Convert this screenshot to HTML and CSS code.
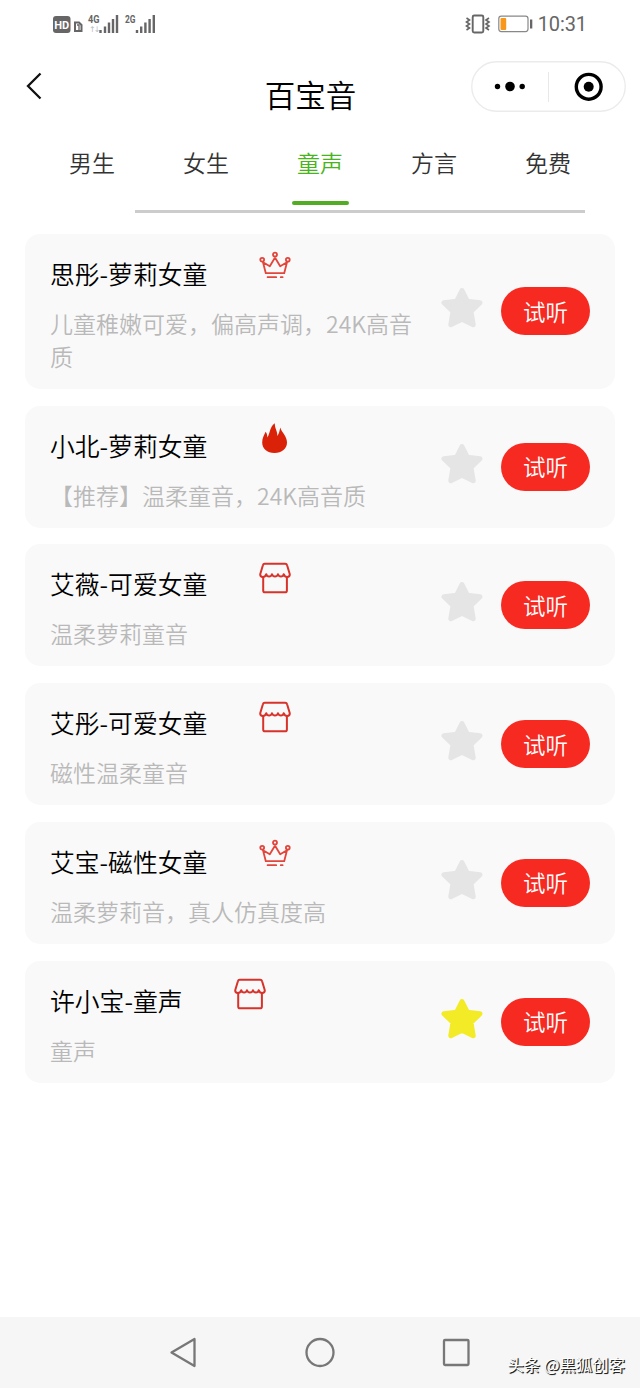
FILE: index.html
```html
<!DOCTYPE html>
<html lang="zh-CN">
<head>
<meta charset="utf-8">
<title>百宝音</title>
<link rel="stylesheet" href="styles.css">
</head>
<body>
<svg class="defs" width="0" height="0" aria-hidden="true">
  <symbol id="crown" viewBox="0 0 32 32">
    <g fill="none" stroke="#e2453b" stroke-width="1.8" stroke-linejoin="round" stroke-linecap="round">
      <path d="M4 11.2L6.800 22.200H25.200L28 11.200L21.2 15.2L16.4 7.2H15.6L10.800 15.200Z"/>
      <path d="M8.6 26.2H17.2M21.8 26.2H23.6"/>
      <circle cx="3.2" cy="8.800" r="1.900" fill="#f9f9f9"/><circle cx="16" cy="3.600" r="2" fill="#f9f9f9"/><circle cx="28.800" cy="8.800" r="1.900" fill="#f9f9f9"/>
    </g>
  </symbol>
  <symbol id="fire" viewBox="0 0 32 32">
    <path fill="#d92207" d="M15.500 30C8 30 3.2 25.500 3.2 19.500C3.2 15.500 4.800 12.500 6.600 8.800C8 10.400 8.300 12.500 8.400 14.500C11.2 10.400 10.400 4.200 15.800.3C15.600 5.200 18.700 8.500 18.300 13C20.300 10.500 20.500 7.500 21.300 4.500C22.800 9.800 28 13 28 19.500C28 25.500 22.800 30 15.500 30Z"/>
  </symbol>
  <symbol id="shop" viewBox="0 0 32 32">
    <g fill="none" stroke="#d7332b" stroke-width="2" stroke-linejoin="round" stroke-linecap="round">
      <path d="M5.600 1.700H26.200Q27.700 1.700 28.100 3.200L30.800 12.300C30.800 15.900 26.100 16.100 24.700 12.200C23.900 15.200 20 15.200 19 12.200C18 15.200 14 15.200 13 12.200C12 15.200 8.100 15.200 7.300 12.200C5.900 16.100 1.200 15.900 1.200 12.300L3.900 3.200Q4.300 1.700 5.600 1.700Z"/>
      <path d="M4.200 15V28.400Q4.200 30.300 6.100 30.300H26Q27.900 30.300 27.900 28.400V15"/>
    </g>
  </symbol>
  <symbol id="star" viewBox="0 0 42 42">
    <path fill="currentColor" stroke="currentColor" stroke-width="5" stroke-linejoin="round" d="M21 3.600L26.300 14.200L39 15.800L30 24.500L32.200 37.700L21 32.300L9.800 37.700L12 24.500L3 15.800L15.700 14.200Z"/>
  </symbol>
</svg>

<header class="status">
  <svg width="110" height="26" viewBox="50 11 110 26">
    <rect x="53" y="16" width="17.500" height="17" rx="3" fill="#666"/>
    <text class="hd" x="54.300" y="28.800" textLength="15" lengthAdjust="spacingAndGlyphs">HD</text>
    <path d="M75 22.500H79L81.500 25V31H75Z" fill="none" stroke="#666" stroke-width="2"/>
    <path d="M77 25H79V30" fill="none" stroke="#666" stroke-width="1.300"/>
    <text class="net" x="88" y="22.700" textLength="11.500" lengthAdjust="spacingAndGlyphs">4G</text>
    <text class="updown" x="89" y="32">↑↓</text>
    <path d="M100.500 30V33M105 26.500V33M109 22.500V33M113 19V33M117 15V33" stroke="#666" stroke-width="2.400"/>
    <text class="net" x="125" y="22.700" textLength="10.500" lengthAdjust="spacingAndGlyphs">2G</text>
    <path d="M137 30V33M141.200 26.500V33M145.400 22.500V33M149.600 19V33M153.800 15V33" stroke="#666" stroke-width="2.400"/>
  </svg>
  <div class="status-right">
    <svg width="68" height="26" viewBox="465 11 68 26">
      <g fill="none" stroke="#666" stroke-width="1.600">
        <rect x="472.700" y="15.500" width="10.600" height="17" rx="1.500" stroke-width="1.900"/>
        <path d="M466.500 18L469.500 20L466.500 22L469.500 24L466.500 26L469.500 28L466.500 30M489 18L486 20L489 22L486 24L489 26L486 28L489 30"/>
        <rect x="498.800" y="16.200" width="29.200" height="15.400" rx="2.500" stroke="#888" stroke-width="1.200"/>
      </g>
      <rect x="500.500" y="18" width="5.700" height="12" rx="1" fill="#f7981d"/>
      <rect x="530" y="19.500" width="2.300" height="9" fill="#666"/>
    </svg>
    <span class="time">10:31</span>
  </div>
</header>

<div class="navbar">
  <svg class="back" width="18" height="30" viewBox="0 0 18 30"><path d="M15.500 2.500L3 15L15.500 27.500" fill="none" stroke="#111" stroke-width="2.300"/></svg>
  <h1 class="title">百宝音</h1>
  <div class="capsule">
    <svg width="155" height="51" viewBox="0 0 155 51">
      <rect x=".75" y=".75" width="153.500" height="49.500" rx="24.750" fill="#fff" stroke="#ebebeb" stroke-width="1.300"/>
      <path d="M77.500 11V41" stroke="#e8e8e8"/>
      <circle cx="26.500" cy="25.500" r="2.700"/><circle cx="39" cy="25.500" r="4.800"/><circle cx="51.200" cy="25.500" r="2.700"/>
      <circle cx="117.700" cy="25.800" r="12.400" fill="none" stroke="#000" stroke-width="3.400"/><circle cx="117.700" cy="25.800" r="5"/>
    </svg>
  </div>
</div>

<nav class="tabs">
  <span class="tab">男生</span>
  <span class="tab">女生</span>
  <span class="tab active">童声</span>
  <span class="tab">方言</span>
  <span class="tab">免费</span>
</nav>
<div class="divider"></div>

<main class="list">
  <section class="card">
    <div class="info"><div class="head"><h2 class="name">思彤-萝莉女童</h2><svg class="badge"><use href="#crown"/></svg></div><p class="desc">儿童稚嫩可爱，偏高声调，24K高音质</p></div>
    <svg class="star"><use href="#star"/></svg><button class="play">试听</button>
  </section>
  <section class="card">
    <div class="info"><div class="head"><h2 class="name">小北-萝莉女童</h2><svg class="badge"><use href="#fire"/></svg></div><p class="desc">【推荐】温柔童音，24K高音质</p></div>
    <svg class="star"><use href="#star"/></svg><button class="play">试听</button>
  </section>
  <section class="card">
    <div class="info"><div class="head"><h2 class="name">艾薇-可爱女童</h2><svg class="badge"><use href="#shop"/></svg></div><p class="desc">温柔萝莉童音</p></div>
    <svg class="star"><use href="#star"/></svg><button class="play">试听</button>
  </section>
  <section class="card">
    <div class="info"><div class="head"><h2 class="name">艾彤-可爱女童</h2><svg class="badge"><use href="#shop"/></svg></div><p class="desc">磁性温柔童音</p></div>
    <svg class="star"><use href="#star"/></svg><button class="play">试听</button>
  </section>
  <section class="card">
    <div class="info"><div class="head"><h2 class="name">艾宝-磁性女童</h2><svg class="badge"><use href="#crown"/></svg></div><p class="desc">温柔萝莉音，真人仿真度高</p></div>
    <svg class="star"><use href="#star"/></svg><button class="play">试听</button>
  </section>
  <section class="card">
    <div class="info"><div class="head"><h2 class="name">许小宝-童声</h2><svg class="badge"><use href="#shop"/></svg></div><p class="desc">童声</p></div>
    <svg class="star on"><use href="#star"/></svg><button class="play">试听</button>
  </section>
</main>

<footer class="sysbar">
  <svg width="310" height="40" viewBox="165 1333 310 40" fill="none" stroke="#777" stroke-width="2.300" stroke-linejoin="round">
    <path d="M171.500 1352.500L194.500 1339V1366Z"/>
    <circle cx="320" cy="1352.500" r="13.500"/>
    <rect x="444" y="1340" width="24.500" height="25" rx="1"/>
  </svg>
  <span class="watermark">头条 @黑狐创客</span>
</footer>
</body>
</html>
```
FILE: styles.css
```css
* { box-sizing: border-box; }
body {
  margin: 0;
  width: 640px;
  height: 1388px;
  display: flex;
  flex-direction: column;
  overflow: hidden;
  background: #fff;
  font-family: "Noto Sans CJK SC", "Noto Sans", sans-serif;
  font-weight: 350;
}
h1, h2, p { margin: 0; font-weight: inherit; }
svg { display: block; flex: none; }
.defs { position: absolute; }

.status {
  height: 48px;
  padding: 0 53px 0 50px;
  display: flex;
  align-items: center;
  justify-content: space-between;
}
.status-right { display: flex; align-items: center; gap: 5px; }
.time { font: 400 20px/26px Roboto, sans-serif; color: #666; letter-spacing: -0.1px; }
.hd { font: 700 11.5px Roboto, sans-serif; fill: #fff; }
.net { font: 700 10.5px Roboto, sans-serif; fill: #666; }
.updown { font: 8px "DejaVu Sans", sans-serif; fill: #bbb; letter-spacing: -2px; }

.navbar {
  height: 82px;
  padding: 13px 14px 0 25px;
  display: grid;
  grid-template-columns: 155px 1fr 155px;
  align-items: start;
}
.back { margin-top: 10px; }
.title {
  padding: 10px 20px 0 0;
  font-size: 30.5px;
  line-height: 46px;
  text-align: center;
  margin-left: -10px;
  color: #000;
}

.tabs {
  height: 80px;
  padding: 9px 35px 5px;
  display: grid;
  grid-template-columns: repeat(5, 114px);
}
.tab {
  display: flex;
  flex-direction: column;
  align-items: center;
  justify-content: space-between;
  font-size: 23px;
  line-height: 46px;
  color: #333;
}
.active { color: #48b41c; }
.active::after {
  content: "";
  width: 57px;
  height: 4px;
  border-radius: 2px;
  background: #52ad24;
}
.divider { width: 450px; height: 3px; margin-left: 135px; background: #ccc; }

.list {
  flex: 1;
  padding: 20.8px 25px 0;
  display: flex;
  flex-direction: column;
  gap: 16.8px;
}
.card {
  min-height: 122px;
  padding: 21px 25px 16px 25px;
  display: flex;
  align-items: center;
  border-radius: 15px;
  background: #f9f9f9;
}
.info { width: 375px; margin-right: 16.5px; align-self: flex-start; }
.head { display: flex; gap: 51.5px; height: 35px; }
.name { font-size: 24.8px; line-height: 36px; color: #000; white-space: nowrap; }
.badge { width: 32px; height: 32px; margin-top: -3.5px; }
.desc { margin-top: 17px; font-size: 23px; line-height: 33px; color: #b9b9b9; }
.star { width: 42px; height: 42px; margin: -11px 18px 0 0; color: #e5e5e5; }
.star.on { color: #f3eb26; }
.play {
  width: 89px;
  height: 48px;
  margin-top: -5px;
  padding: 0 0 1px;
  border: 0;
  border-radius: 24px;
  background: #f72a22;
  color: #fff;
  font: inherit;
  font-size: 22.5px;
}

.sysbar {
  position: relative;
  height: 71px;
  padding: 16px 165px 0;
  background: #f6f6f6;
}
.watermark {
  position: absolute;
  right: 15px;
  bottom: 11px;
  font-size: 16.4px;
  font-weight: 400;
  line-height: 26px;
  color: #fff;
  white-space: nowrap;
  text-shadow: 1px 1px 0 #222, 1px 1px 1px #555;
}
```
